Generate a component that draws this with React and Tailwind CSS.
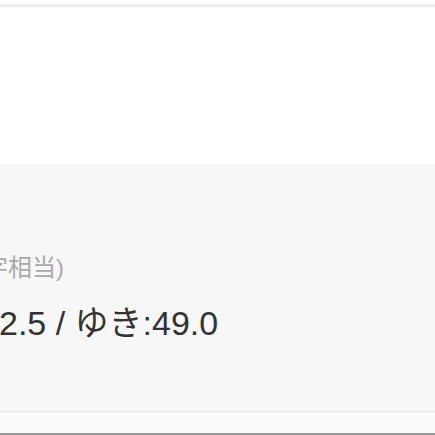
export default function App() {
  return (
    <div className="w-[435px] h-[435px] overflow-hidden bg-white flex flex-col">
      <div className="h-[4px] bg-white shrink-0" />
      <div className="h-[3px] bg-[#eeeeee] shrink-0" />
      <div className="h-[157px] bg-white shrink-0" />
      <div className="h-[247px] bg-[#f7f7f7] shrink-0 overflow-hidden flex flex-col pt-[88px]">
        <div className="-ml-[16px] whitespace-nowrap text-[24px] leading-[32px] text-[#a9a9a9] font-['Liberation_Sans','Noto_Sans_CJK_JP',sans-serif]">
          字相当)
        </div>
        <div className="mt-[19px] -ml-[1px] whitespace-nowrap text-[34px] leading-[40px] text-[#333333] font-['Liberation_Sans','Noto_Sans_CJK_JP',sans-serif]">
          2.5 / ゆき:49.0
        </div>
      </div>
      <div className="h-px bg-[#e8e8e8] shrink-0" />
      <div className="h-[21px] bg-[#f9f9f9] shrink-0" />
      <div className="h-[2px] bg-[#9a9a9a] shrink-0" />
    </div>
  );
}
